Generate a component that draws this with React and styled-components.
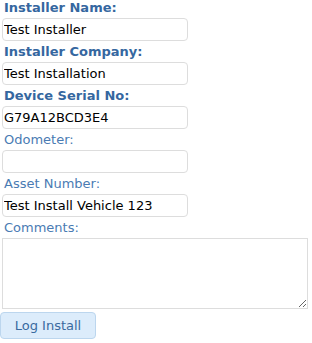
import React from "react";
import styled, {createGlobalStyle} from 'styled-components';

const GlobalStyle = createGlobalStyle`
  body {
    margin: 0;
    background: #FFFFFF;
    font-family: "DejaVu Sans", Verdana, sans-serif;
  }
`;

const fields = [
  {label: 'Installer Name:', value: 'Test Installer', strong: true},
  {label: 'Installer Company:', value: 'Test Installation', strong: true},
  {label: 'Device Serial No:', value: 'G79A12BCD3E4', strong: true},
  {label: 'Odometer:', value: ''},
  {label: 'Asset Number:', value: 'Test Install Vehicle 123'},
];

export default function App() {
  return (
    <>
      <GlobalStyle/>
      <InstallForm onSubmit={e => e.preventDefault()}>
        {fields.map((f, i) => (
          <FieldBlock key={f.label} $first={i === 0}>
            <Label $strong={f.strong}>{f.label}</Label>
            <Input type={'text'} defaultValue={f.value}/>
          </FieldBlock>
        ))}
        <FieldBlock>
          <Label>Comments:</Label>
          <Comments/>
        </FieldBlock>
        <Button type={'submit'}>Log Install</Button>
      </InstallForm>
    </>
  )
}

const InstallForm = styled.form`
  width: 312px;
  display: flex;
  flex-direction: column;
  align-items: flex-start;
`;

const FieldBlock = styled.div`
  display: flex;
  flex-direction: column;
  align-items: flex-start;
  margin-top: ${p => p.$first ? '0' : '3px'};
  padding-left: 2px;
`;

const Label = styled.label`
  font-size: 13px;
  line-height: 16px;
  height: 16px;
  margin: 0 0 2px 2px;
  font-weight: ${p => p.$strong ? 'bold' : 'normal'};
  color: ${p => p.$strong ? '#3567a0' : '#4a7bb3'};
`;

const Input = styled.input`
  box-sizing: border-box;
  width: 186px;
  height: 23px;
  margin: 0;
  padding: 1px 1px;
  border: 1px solid #dddddd;
  border-radius: 4px;
  font-family: "DejaVu Sans", Verdana, sans-serif;
  font-size: 13px;
  color: #000000;
  outline: none;
`;

const Comments = styled.textarea`
  box-sizing: border-box;
  width: 306px;
  height: 71px;
  margin: 0;
  padding: 1px;
  border: 1px solid #dddddd;
  border-radius: 0;
  font-family: "DejaVu Sans", Verdana, sans-serif;
  font-size: 13px;
  outline: none;
`;

const Button = styled.button`
  box-sizing: border-box;
  margin-top: 3px;
  width: 96px;
  height: 27px;
  padding: 0;
  background: #dcecfb;
  border: 1px solid #bcd6ee;
  border-radius: 4px;
  font-family: "DejaVu Sans", Verdana, sans-serif;
  font-size: 13px;
  color: #3a6aa0;
`;
